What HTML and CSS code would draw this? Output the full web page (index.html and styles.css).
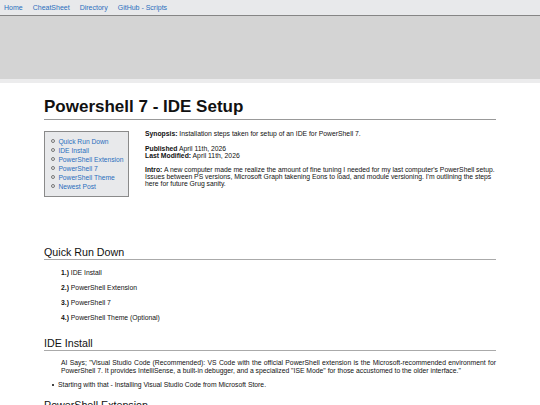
FILE: index.html
```html
<!DOCTYPE html>
<html>
<head>
<meta charset="utf-8">
<link rel="stylesheet" href="styles.css">
</head>
<body>
<nav class="nav">
  <a href="#">Home</a>
  <a href="#">CheatSheet</a>
  <a href="#">Directory</a>
  <a href="#">GitHub - Scripts</a>
</nav>
<div class="banner"></div>
<div class="strip"></div>
<main class="content">
  <h1 class="title">Powershell 7 - IDE Setup</h1>
  <div class="intro-row">
    <div class="toc">
      <ul>
        <li><a href="#">Quick Run Down</a></li>
        <li><a href="#">IDE Install</a></li>
        <li><a href="#">PowerShell Extension</a></li>
        <li><a href="#">PowerShell 7</a></li>
        <li><a href="#">PowerShell Theme</a></li>
        <li><a href="#">Newest Post</a></li>
      </ul>
    </div>
    <div class="summary">
      <p><b>Synopsis:</b> Installation steps taken for setup of an IDE for PowerShell 7.</p>
      <p class="dates"><b>Published</b> April 11th, 2026<br><b>Last Modified:</b> April 11th, 2026</p>
      <p class="intro"><b>Intro:</b> A new computer made me realize the amount of fine tuning I needed for my last computer's PowerShell setup. Issues between PS versions, Microsoft Graph takening Eons to load, and module versioning. I'm outlining the steps here for future Grug sanity.</p>
    </div>
  </div>
  <h2 class="section first">Quick Run Down</h2>
  <div class="steps">
    <p><b>1.)</b> IDE Install</p>
    <p><b>2.)</b> PowerShell Extension</p>
    <p><b>3.)</b> PowerShell 7</p>
    <p><b>4.)</b> PowerShell Theme (Optional)</p>
  </div>
  <h2 class="section">IDE Install</h2>
  <p class="body-text">AI Says; "Visual Studio Code (Recommended): VS Code with the official PowerShell extension is the Microsoft-recommended environment for PowerShell 7. It provides IntelliSense, a built-in debugger, and a specialized "ISE Mode" for those accustomed to the older interface."</p>
  <ul class="bullets">
    <li>Starting with that - Installing Visual Studio Code from Microsoft Store.</li>
  </ul>
  <h2 class="section">PowerShell Extension</h2>
</main>
</body>
</html>
```
FILE: styles.css
```css
html, body {
  margin: 0;
  padding: 0;
  background: #ffffff;
  font-family: "Liberation Sans", Arial, sans-serif;
  color: #111;
}
.nav {
  height: 15px;
  background: #e8e9eb;
  border-bottom: 1px solid #858585;
  display: flex;
  align-items: center;
  gap: 10px;
  padding-left: 4px;
  font-size: 7px;
}
.nav a {
  color: #2a6ebd;
  text-decoration: none;
}
.banner {
  height: 63px;
  background: #d4d4d4;
}
.strip {
  height: 4px;
  background: #ececed;
}
.content {
  margin: 0 44px;
}
.title {
  font-size: 17px;
  font-weight: bold;
  margin: 15px 0 0;
  padding-bottom: 3px;
  line-height: 18px;
  border-bottom: 1px solid #999;
}
.intro-row {
  display: flex;
  gap: 16px;
  margin-top: 11px;
  align-items: flex-start;
}
.toc {
  width: 83px;
  height: 64px;
  flex: none;
  background: #e8e9eb;
  border: 1px solid #8a8a8a;
}
.toc ul {
  margin: 5px 0 0;
  padding: 0 0 0 13px;
  list-style: none;
  font-size: 6.7px;
  line-height: 9px;
}
.toc li::before {
  content: "";
  display: inline-block;
  vertical-align: 1px;
  width: 2px;
  height: 2px;
  margin-left: -7px;
  margin-right: 3.4px;
  border: 0.8px solid #777;
  border-radius: 50%;
}
.toc a {
  color: #2a6ebd;
  text-decoration: none;
}
.summary {
  flex: 1;
  margin-top: -1px;
  font-size: 6.8px;
  line-height: 7px;
}
.summary p {
  margin: 0 0 8px;
}
.summary p.dates {
  margin-bottom: 7px;
}
.summary p.intro {
  margin: 0;
}
.section {
  font-size: 10.7px;
  font-weight: normal;
  margin: 15px 0 0;
  line-height: 12px;
  padding-bottom: 1px;
  border-bottom: 1px solid #aaa;
}
.section.first {
  margin-top: 49px;
}
.steps {
  padding-left: 17px;
  font-size: 6.8px;
  line-height: 8px;
  margin-top: 9px;
}
.steps p {
  margin: 0 0 7px;
}
.body-text {
  font-size: 6.8px;
  line-height: 8px;
  margin: 8px 0 0;
  padding-left: 17px;
  text-align: justify;
}
.bullets {
  font-size: 6.8px;
  line-height: 8px;
  list-style: none;
  padding-left: 14px;
  margin: 6px 0 0;
}
.bullets li::before {
  content: "";
  display: inline-block;
  vertical-align: 1.5px;
  width: 2px;
  height: 2px;
  margin-left: -6px;
  margin-right: 4px;
  background: #444;
}
.bullets + .section {
  margin-top: 10px;
}
```
